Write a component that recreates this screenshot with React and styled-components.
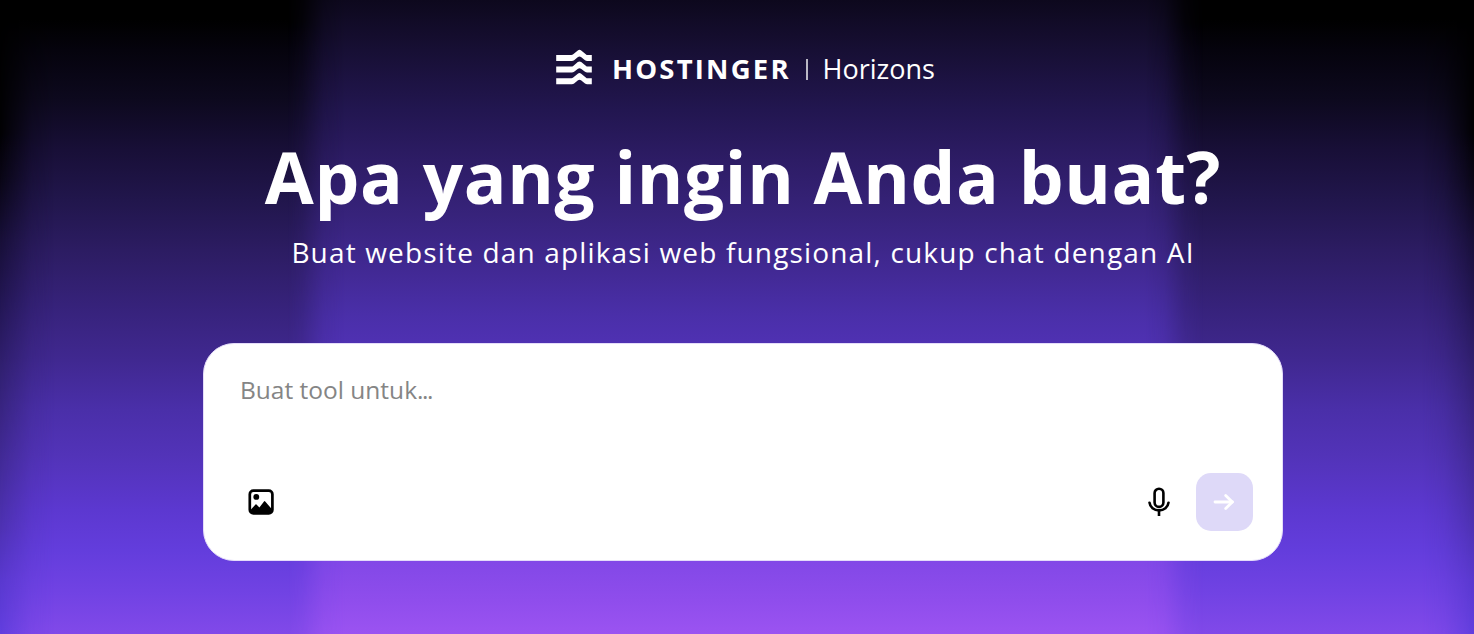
import React from "react";
import styled, {createGlobalStyle, ThemeProvider} from "styled-components";

const theme = {
    color: {
        text: "#ffffff",
        card: "#ffffff",
        placeholder: "#858585",
        icons: "#000000",
        button: "#ded9f8",
    },
    font: "'Open Sans', 'Noto Sans', sans-serif",
}

const App = () => {
    return (
        <ThemeProvider theme={theme}>
            <GlobalStyle/>
            <Hero>
                <EdgeGlow/>
                <SideGlow/>
                <CenterGlow/>
                <Content>
                    <Brand>
                        <LogoMark/>
                        <BrandName>HOSTINGER</BrandName>
                        <Divider/>
                        <ProductName>Horizons</ProductName>
                    </Brand>
                    <Title>Apa yang ingin Anda buat?</Title>
                    <Subtitle>Buat website dan aplikasi web fungsional, cukup chat dengan AI</Subtitle>
                    <PromptCard>
                        <Placeholder>Buat tool untuk<Dots>...</Dots></Placeholder>
                        <Toolbar>
                            <IconButton aria-label="Gambar">
                                <ImageIcon/>
                            </IconButton>
                            <Actions>
                                <IconButton aria-label="Mikrofon">
                                    <MicIcon/>
                                </IconButton>
                                <SendButton aria-label="Kirim">
                                    <ArrowIcon/>
                                </SendButton>
                            </Actions>
                        </Toolbar>
                    </PromptCard>
                </Content>
            </Hero>
        </ThemeProvider>
    )
}

const LogoMark = () => (
    <svg width="36" height="36" viewBox="0 0 36 36" fill="#fff">
        {[0, 11.6, 23.2].map((y) => (
            <path
                key={y}
                transform={`translate(0 ${y})`}
                d="M0.2 6H15.3Q16.4 6 17.2 5.3L21.8 1.5Q23.5 0.1 25.2 1.5L30.7 6H35.8V12H31.2Q30 12 29 11.2L25 8.1Q23.5 7 22 8.1L18.1 11.2Q17.1 12 15.8 12H0.2Z"
            />
        ))}
    </svg>
)

const ImageIcon = () => (
    <svg width="26" height="26" viewBox="0 0 26 26">
        <rect x="1.8" y="1.6" width="22.6" height="22.8" rx="3.6" fill="none" stroke="#000" strokeWidth="2.7"/>
        <circle cx="8.3" cy="7.9" r="2.9"/>
        <path d="M1.6 22L7.5 15.4Q8 14.9 8.5 15.4L11.4 18.6L16 12.4Q16.6 11.7 17.2 12.4L24.6 21V22Q24 24.6 21.5 24.6H4.5Q2 24.6 1.6 22Z"/>
    </svg>
)

const MicIcon = () => (
    <svg width="22" height="30" viewBox="0 0 22 30" fill="none" stroke="#000" strokeWidth="2.6">
        <rect x="6.6" y="1.7" width="8.8" height="18.2" rx="4.4"/>
        <path d="M1.5 15.7C2 20.2 6 23.4 11 23.4S20 20.2 20.5 15.7" strokeLinecap="round"/>
        <path d="M11 23.4V29"/>
    </svg>
)

const ArrowIcon = () => (
    <svg width="22" height="18" viewBox="0 0 22 18" fill="none" stroke="#fff" strokeWidth="2.8">
        <path d="M2 9H19.5" strokeLinecap="round"/>
        <path d="M12.7 2.4L19.3 9L12.7 15.6" strokeLinecap="round" strokeLinejoin="round"/>
    </svg>
)


const GlobalStyle = createGlobalStyle`
  * {
    box-sizing: border-box;
  }
  body {
    margin: 0;
    background: #000;
    overflow: hidden;
  }
`

const Hero = styled.main`
  display: grid;
  width: 1474px;
  height: 634px;
  overflow: hidden;
  font-family: ${p => p.theme.font};
  color: ${p => p.theme.color.text};
`

const Glow = styled.div`
  grid-area: 1 / 1;
`

const EdgeGlow = styled(Glow)`
  background: linear-gradient(
    #000 0, #000 130px, #080513 180px, #160e35 240px, #211550 300px,
    #312071 375px, #3e288e 445px, #4b30ad 520px, #5838ce 580px, #5f3dde 634px
  );
`

const SideGlow = styled(Glow)`
  background: linear-gradient(
    #000 0, #000 20px, #05030d 50px, #0d091e 100px, #180f37 150px,
    #21164c 200px, #2c1c62 250px, #36227a 305px, #402890 360px,
    #4a2fa9 410px, #5233b8 455px, #5c38d0 510px, #633ddc 550px,
    #7042e3 590px, #8149e9 634px
  );
  mask-image: linear-gradient(
    90deg, rgba(0, 0, 0, 0.05) 0, rgba(0, 0, 0, 0.35) 12px, rgba(0, 0, 0, 0.8) 32px, #000 55px,
    #000 1422px, rgba(0, 0, 0, 0.8) 1444px, rgba(0, 0, 0, 0.35) 1464px, rgba(0, 0, 0, 0.05) 1474px
  );
`

const CenterGlow = styled(Glow)`
  background: linear-gradient(
    #0d081d 0, #170f34 50px, #221650 110px, #2d1c65 160px,
    #37237b 215px, #402890 262px, #4a2fa9 315px, #5132b6 355px,
    #6039d8 430px, #6d41e3 480px, #8047e6 555px, #8f4dec 600px, #9b53f1 634px
  );
  mask-image: linear-gradient(
    90deg, transparent 288px, rgba(0, 0, 0, 0.2) 302px, rgba(0, 0, 0, 0.8) 324px, #000 345px,
    #000 1145px, rgba(0, 0, 0, 0.8) 1164px, rgba(0, 0, 0, 0.2) 1185px, transparent 1203px
  );
`

const Content = styled.div`
  grid-area: 1 / 1;
  display: flex;
  flex-direction: column;
  align-items: center;
  padding: 49px 191px 0 203px;
  z-index: 1;
`

const Brand = styled.div`
  display: flex;
  align-items: center;
  align-self: flex-start;
  height: 36px;
  margin-left: 353px;
  line-height: 36px;
  white-space: nowrap;
`

const BrandName = styled.span`
  width: 194px;
  margin-left: 20px;
  padding-top: 4px;
  font-size: 27.5px;
  font-weight: 700;
  letter-spacing: 2.2px;
`

const Divider = styled.span`
  width: 1.5px;
  height: 21px;
  margin: 4px 15px 0 0;
  background: rgba(255, 255, 255, 0.7);
`

const ProductName = styled.span`
  padding-top: 4px;
  font-size: 27px;
`

const Title = styled.h1`
  height: 98px;
  margin: 43px 0 0;
  font-size: 71px;
  font-weight: 700;
  line-height: 98px;
  letter-spacing: 0.65px;
  white-space: nowrap;
`

const Subtitle = styled.p`
  height: 40px;
  margin: 6px 0 0;
  font-size: 28px;
  line-height: 40px;
  letter-spacing: 1.16px;
  white-space: nowrap;
`

const PromptCard = styled.section`
  display: flex;
  flex-direction: column;
  justify-content: space-between;
  width: 1080px;
  height: 218px;
  margin-top: 71px;
  padding: 26px 29px 29px 36px;
  border: 1px solid #e4dcfa;
  border-radius: 31px;
  background: ${p => p.theme.color.card};
`

const Placeholder = styled.div`
  color: ${p => p.theme.color.placeholder};
  font-size: 24.5px;
  line-height: 40px;
`

const Dots = styled.span`
  letter-spacing: -1.5px;
`

const Toolbar = styled.div`
  display: flex;
  align-items: center;
  justify-content: space-between;
`

const Actions = styled.div`
  display: flex;
  align-items: center;
  gap: 12px;
`

const IconButton = styled.button`
  display: flex;
  align-items: center;
  justify-content: center;
  width: 42px;
  height: 42px;
  padding: 0;
  border: 0;
  background: none;
  color: ${p => p.theme.color.icons};
`

const SendButton = styled(IconButton)`
  width: 57px;
  height: 58px;
  margin-left: 4px;
  padding: 0 1px 0 0;
  border-radius: 15px;
  background: ${p => p.theme.color.button};
`


export default App;
